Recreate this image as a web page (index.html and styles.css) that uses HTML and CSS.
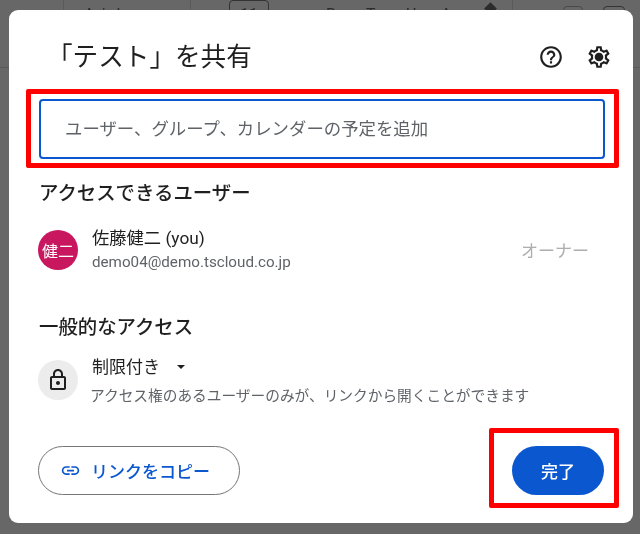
FILE: index.html
```html
<!DOCTYPE html>
<html lang="ja">
<head>
<meta charset="utf-8">
<title>共有</title>
<link rel="stylesheet" href="styles.css">
</head>
<body>
<div class="backdrop">
  <div class="toolbar">
    <span class="tb-sep tb-sep-a"></span>
    <span class="tb-item tb-font">Arial</span>
    <span class="tb-sep tb-sep-b"></span>
    <span class="tb-box">11</span>
    <span class="tb-item tb-plus">+</span>
    <span class="tb-item tb-b">B</span>
    <span class="tb-item tb-i">T</span>
    <span class="tb-item tb-u">U</span>
    <span class="tb-item tb-c">A</span>
    <span class="tb-pen"></span>
    <span class="tb-sep tb-sep-c"></span>
    <span class="tb-box tb-box-s"></span>
    <span class="tb-box tb-box-t"></span>
  </div>
  <div class="rule"></div>
  <section class="dialog">
    <header class="head">
      <h1 class="title">「テスト」を共有</h1>
      <div class="head-icons">
        <svg class="ico" viewBox="0 0 24 24"><path d="M11 18h2v-2h-2v2zm1-16C6.48 2 2 6.48 2 12s4.48 10 10 10 10-4.48 10-10S17.52 2 12 2zm0 18c-4.41 0-8-3.59-8-8s3.59-8 8-8 8 3.59 8 8-3.59 8-8 8zm0-14c-2.21 0-4 1.79-4 4h2c0-1.1.9-2 2-2s2 .9 2 2c0 2-3 1.75-3 5h2c0-2.25 3-2.5 3-5 0-2.21-1.79-4-4-4z"/></svg>
        <svg class="ico" viewBox="0 0 24 24"><path d="M19.43 12.98c.04-.32.07-.64.07-.98s-.03-.66-.07-.98l2.11-1.65c.19-.15.24-.42.12-.64l-2-3.46c-.12-.22-.39-.3-.61-.22l-2.49 1c-.52-.4-1.08-.73-1.69-.98l-.38-2.65C14.46 2.18 14.25 2 14 2h-4c-.25 0-.46.18-.49.42l-.38 2.65c-.61.25-1.17.59-1.69.98l-2.49-1c-.23-.09-.49 0-.61.22l-2 3.46c-.13.22-.07.49.12.64l2.11 1.65c-.04.32-.07.65-.07.98s.03.66.07.98l-2.11 1.65c-.19.15-.24.42-.12.64l2 3.46c.12.22.39.3.61.22l2.49-1c.52.4 1.08.73 1.69.98l.38 2.65c.03.24.24.42.49.42h4c.25 0 .46-.18.49-.42l.38-2.65c.61-.25 1.17-.59 1.69-.98l2.49 1c.23.09.49 0 .61-.22l2-3.46c.12-.22.07-.49-.12-.64l-2.11-1.65zM17.45 11.27c.04.31.05.52.05.73 0 .21-.02.43-.05.73l-.14 1.13.89.7 1.08.84-.7 1.21-1.27-.51-1.04-.42-.9.68c-.43.32-.84.56-1.25.73l-1.06.43-.16 1.13-.2 1.35h-1.4l-.19-1.35-.16-1.13-1.06-.43c-.43-.18-.83-.41-1.23-.71l-.91-.7-1.06.43-1.27.51-.7-1.21 1.08-.84.89-.7-.14-1.13c-.03-.31-.05-.54-.05-.74s.02-.43.05-.73l.14-1.13-.89-.7-1.08-.84.7-1.21 1.27.51 1.04.42.9-.68c.43-.32.84-.56 1.25-.73l1.06-.43.16-1.13.2-1.35h1.39l.19 1.35.16 1.13 1.06.43c.43.18.83.41 1.23.71l.91.7 1.06-.43 1.27-.51.7 1.21-1.07.85-.89.7.14 1.13zM12 8c-2.21 0-4 1.79-4 4s1.79 4 4 4 4-1.79 4-4-1.79-4-4-4z"/></svg>
      </div>
    </header>

    <div class="mark mark-input">
      <div class="field">ユーザー、グループ、カレンダーの予定を追加</div>
    </div>

    <h2 class="section section-people">アクセスできるユーザー</h2>
    <div class="person">
      <div class="avatar">健二</div>
      <div class="person-text">
        <div class="person-name">佐藤健二 (you)</div>
        <div class="person-mail">demo04@demo.tscloud.co.jp</div>
      </div>
      <div class="role">オーナー</div>
    </div>

    <h2 class="section section-general">一般的なアクセス</h2>
    <div class="access">
      <div class="lock">
        <svg class="lock-ico" viewBox="0 0 24 24"><path d="M18 8h-1V6c0-2.76-2.24-5-5-5S7 3.24 7 6v2H6c-1.1 0-2 .9-2 2v10c0 1.1.9 2 2 2h12c1.1 0 2-.9 2-2V10c0-1.1-.9-2-2-2zM9 6c0-1.66 1.34-3 3-3s3 1.34 3 3v2H9V6zm9 14H6V10h12v10zm-6-3c1.1 0 2-.9 2-2s-.9-2-2-2-2 .9-2 2 .9 2 2 2z"/></svg>
      </div>
      <div class="access-text">
        <div class="access-name">制限付き<span class="caret"></span></div>
        <div class="access-desc">アクセス権のあるユーザーのみが、リンクから開くことができます</div>
      </div>
    </div>

    <footer class="foot">
      <button class="copy" type="button">
        <svg class="link-ico" viewBox="0 0 24 24"><path d="M3.9 12c0-1.71 1.39-3.1 3.1-3.1h4V7H7c-2.76 0-5 2.24-5 5s2.24 5 5 5h4v-1.9H7c-1.71 0-3.1-1.39-3.1-3.1zM8 13h8v-2H8v2zm9-6h-4v1.9h4c1.71 0 3.1 1.39 3.1 3.1s-1.39 3.1-3.1 3.1h-4V17h4c2.76 0 5-2.24 5-5s-2.24-5-5-5z"/></svg>
        <span>リンクをコピー</span>
      </button>
      <div class="mark mark-done">
        <button class="done" type="button">完了</button>
      </div>
    </footer>
  </section>
</div>
</body>
</html>
```

FILE: styles.css
```css
* { box-sizing: border-box; }
html, body { margin: 0; height: 100%; }
body {
  font-family: Roboto, "Noto Sans CJK JP", sans-serif;
  background: #666;
  color: #1f1f1f;
  overflow: hidden;
}
.backdrop {
  position: relative;
  width: 640px;
  height: 534px;
  padding: 10px 7px 10px 9px;
  background: #676767;
  filter: blur(0.35px);
}

/* Dimmed editor toolbar behind the dialog */
.toolbar {
  position: absolute;
  top: 0;
  left: 0;
  width: 640px;
  height: 30px;
  overflow: hidden;
  font-size: 16px;
  line-height: 30px;
  color: #2c2c2c;
}
.tb-item { position: absolute; top: 0; }
.tb-font { left: 84px; letter-spacing: 1px; }
.tb-plus { left: 283px; }
.tb-b { left: 326px; }
.tb-i { left: 366px; }
.tb-u { left: 406px; }
.tb-c { left: 441px; }
.tb-sep { position: absolute; top: 0; width: 1px; height: 24px; background: #5a5a5a; }
.tb-sep-a { left: 63px; }
.tb-sep-b { left: 190px; }
.tb-sep-c { left: 512px; }
.tb-box {
  position: absolute;
  top: 0;
  left: 229px;
  width: 40px;
  height: 24px;
  border: 1px solid #333;
  border-radius: 4px;
  text-align: center;
  line-height: 28px;
}
.tb-box-s { left: 563px; top: 6px; width: 20px; border-color: #4a4a4a; }
.tb-box-t { left: 603px; top: 6px; width: 22px; }
.tb-pen {
  position: absolute;
  left: 486px;
  top: 4px;
  width: 9px;
  height: 9px;
  background: #2c2c2c;
  transform: rotate(45deg);
}
.rule {
  position: absolute;
  top: 67px;
  left: 0;
  width: 640px;
  height: 1px;
  background: #5a5a5a;
}

/* Dialog */
.dialog {
  position: relative;
  width: 624px;
  height: 513px;
  background: #fff;
  border-radius: 9px;
  padding: 0 0 0 17px;
  display: flex;
  flex-direction: column;
}
.head {
  display: flex;
  justify-content: space-between;
  align-items: center;
  height: 79px;
  padding: 31px 21px 16px 21px;
}
.title {
  margin: 0;
  font-size: 25.6px;
  font-weight: 400;
  line-height: 32px;
  color: #1f1f1f;
}
.head-icons { display: flex; gap: 22px; }
.ico { width: 26px; height: 26px; fill: #1f1f1f; display: block; }
.mark {
  border: 5px solid #f00;
  border-radius: 2px;
  background: #fff;
}
.mark-input {
  width: 593px;
  height: 79px;
  padding: 5px 9px 4px 8px;
}
.field {
  height: 60px;
  border: 2px solid #0b57d0;
  border-radius: 4px;
  padding: 0 0 4px 24px;
  display: flex;
  align-items: center;
  font-size: 17.4px;
  color: #5f6368;
}
.section {
  margin: 0;
  font-size: 19.4px;
  font-weight: 500;
  line-height: 24px;
  color: #1f1f1f;
}
.section-people { margin-top: 14px; margin-left: 13px; }
.person {
  display: flex;
  align-items: center;
  height: 56px;
  margin-top: 16px;
  margin-left: 12px;
  padding-right: 44px;
}
.avatar {
  width: 40px;
  height: 40px;
  border-radius: 50%;
  background: #c8175f;
  color: #fff;
  font-size: 16px;
  display: flex;
  align-items: center;
  justify-content: center;
}
.person-text { margin-left: 14px; flex: 1; }
.person-name { font-size: 17.3px; line-height: 24px; }
.person-mail { font-size: 15.2px; line-height: 24px; color: #5f6368; }
.role { margin-bottom: 2px; font-size: 17px; color: #aeaeae; }
.section-general { margin-top: 38px; margin-left: 13px; }
.access {
  display: flex;
  align-items: center;
  margin-top: 15px;
  margin-left: 12px;
}
.lock {
  width: 40px;
  height: 40px;
  margin-bottom: 2px;
  border-radius: 50%;
  background: #ececec;
  display: flex;
  align-items: center;
  justify-content: center;
}
.lock-ico { width: 24px; height: 24px; fill: #1f1f1f; }
.access-text { margin-left: 12px; }
.access-name {
  margin-left: 2px;
  font-size: 17px;
  line-height: 24px;
  display: flex;
  align-items: center;
}
.caret {
  width: 0;
  height: 0;
  margin-left: 17px;
  border-left: 4px solid transparent;
  border-right: 4px solid transparent;
  border-top: 4px solid #1f1f1f;
}
.access-desc { font-size: 14.7px; line-height: 20px; margin-top: 7px; color: #5f6368; }
.foot {
  display: flex;
  align-items: flex-start;
  justify-content: space-between;
  margin-top: 22px;
  margin-left: 12px;
}
.copy {
  display: flex;
  align-items: center;
  gap: 10px;
  height: 49px;
  width: 202px;
  margin-top: 18px;
  padding: 0 0 0 21px;
  background: #fff;
  border: 1px solid #747775;
  border-radius: 25px;
  color: #0b57d0;
  font: 500 17px Roboto, "Noto Sans CJK JP", sans-serif;
}
.link-ico { width: 21px; height: 21px; fill: #0b57d0; }
.mark-done {
  width: 130px;
  height: 80px;
  margin-right: 14px;
  padding: 13px 0 0 18px;
}
.done {
  display: block;
  width: 92px;
  height: 49px;
  border: 0;
  border-radius: 25px;
  background: #0b57d0;
  color: #fff;
  font: 500 17px Roboto, "Noto Sans CJK JP", sans-serif;
}
```
